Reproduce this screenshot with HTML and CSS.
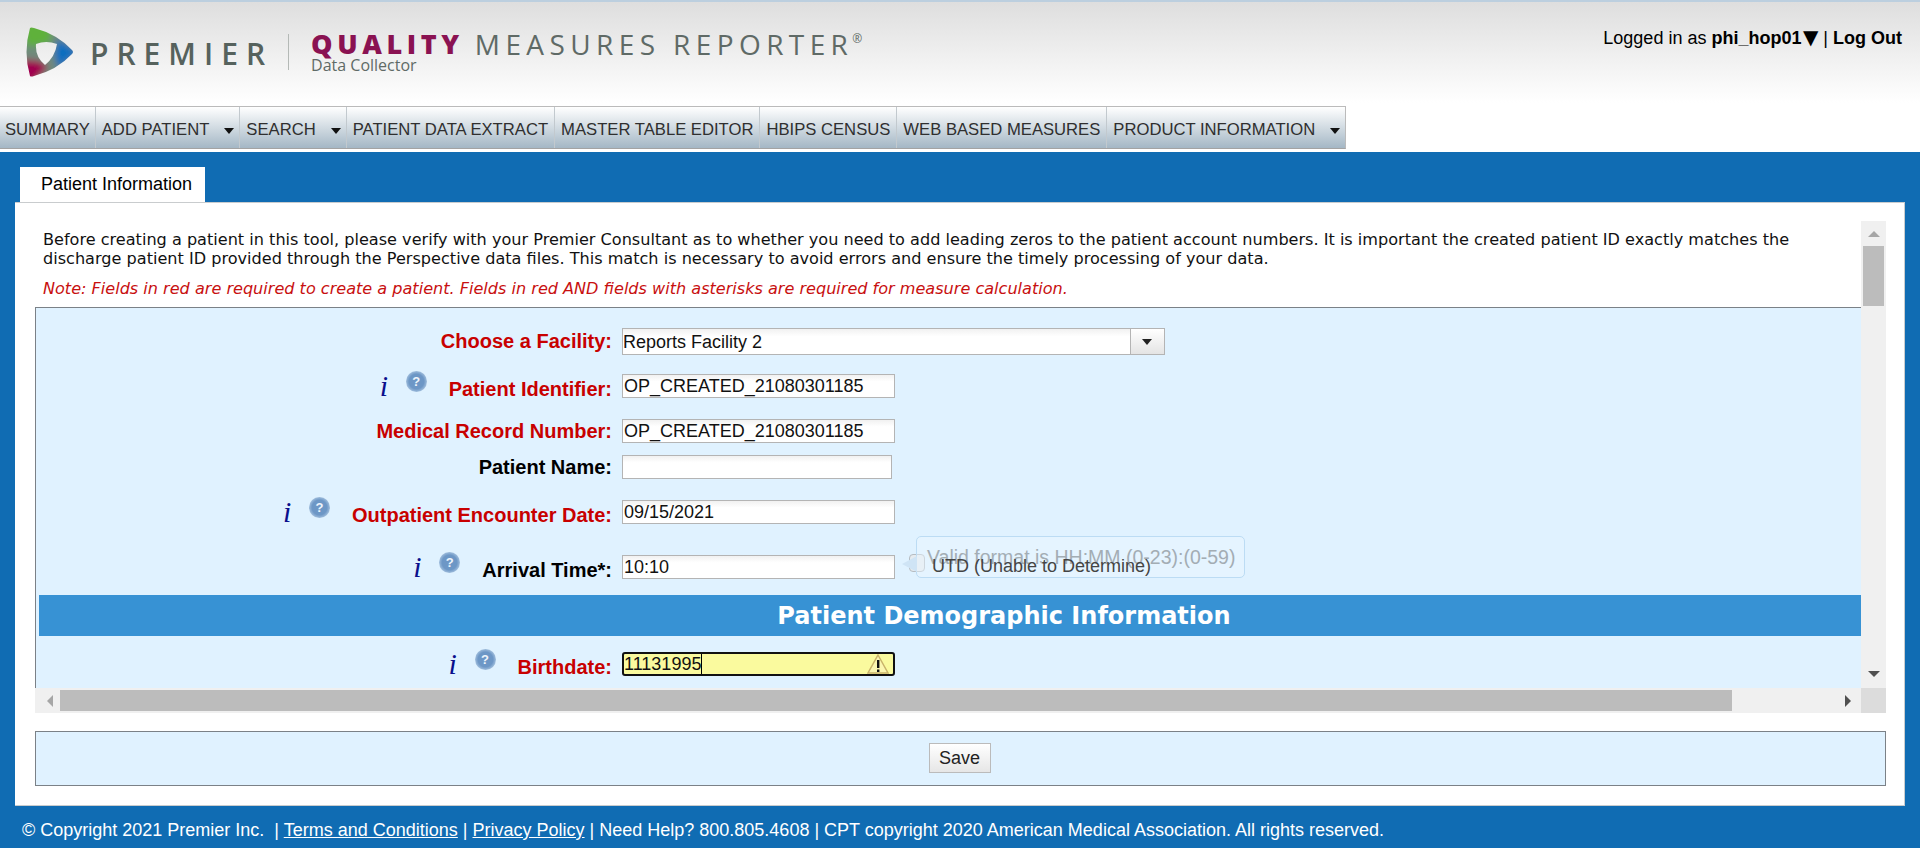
FILE: index.html
```html
<!DOCTYPE html>
<html lang="en">
<head>
    <meta charset="UTF-8">
    <meta name="viewport" content="width=device-width, initial-scale=1.0">
    <title>Quality Measures Reporter - Patient Information</title>
    <link rel="stylesheet" href="styles.css">
</head>
<body>

    <header class="site-header">
        <div class="brand">
            <svg class="logo-mark" width="50" height="50" viewBox="0 0 50 50">
                <defs>
                    <clipPath id="ring">
                        <path clip-rule="evenodd" d="M6 1 Q7 0 10 1 Q33 7 48 23 Q50 25 48 27 Q33 43 10 49 Q7 50 6 49 Q-1 25 6 1 Z M12 17 Q22 13 33 17 Q31 30 21 38 Q11 30 12 17 Z"/>
                    </clipPath>
                    <filter id="soft" x="-30%" y="-30%" width="160%" height="160%">
                        <feGaussianBlur stdDeviation="3"/>
                    </filter>
                </defs>
                <g clip-path="url(#ring)">
                    <g filter="url(#soft)">
                        <rect x="-5" y="-5" width="60" height="60" fill="#6f8a7c"/>
                        <polygon points="-5,-5 28,-5 26,16 4,20" fill="#5fb13a"/>
                        <polygon points="34,12 55,25 34,42 30,26" fill="#0d6ebf"/>
                        <polygon points="-5,32 16,34 24,40 10,55 -5,55" fill="#a0054f"/>
                    </g>
                </g>
            </svg>
            <span class="brand-premier">PREMIER</span>
            <span class="brand-divider"></span>
            <div class="brand-product">
                <div class="brand-title"><b>QUALITY</b><span class="brand-measures">MEASURES REPORTER</span><sup>®</sup></div>
                <div class="brand-sub">Data Collector</div>
            </div>
        </div>
        <div class="user-info">Logged in as <b>phi_hop01</b><span class="user-arrow">▼</span> | <b>Log Out</b></div>
    </header>

    <nav class="main-nav">
        <a href="#">SUMMARY</a>
        <a href="#" class="has-menu">ADD PATIENT</a>
        <a href="#" class="has-menu">SEARCH</a>
        <a href="#">PATIENT DATA EXTRACT</a>
        <a href="#">MASTER TABLE EDITOR</a>
        <a href="#">HBIPS CENSUS</a>
        <a href="#">WEB BASED MEASURES</a>
        <a href="#" class="has-menu">PRODUCT INFORMATION</a>
    </nav>

    <main class="page">
        <div class="tab">Patient Information</div>
        <section class="panel">
            <div class="scroll-frame">
                <div class="scroll-content">
                    <p class="intro">Before creating a patient in this tool, please verify with your Premier Consultant as to whether you need to add leading zeros to the patient account numbers. It is important the created patient ID exactly matches the discharge patient ID provided through the Perspective data files. This match is necessary to avoid errors and ensure the timely processing of your data.</p>
                    <p class="note">Note: Fields in red are required to create a patient. Fields in red AND fields with asterisks are required for measure calculation.</p>

                    <form class="patient-form">
                        <div class="row row-facility">
                            <div class="label-cell required"><label>Choose a Facility:</label></div>
                            <div class="select-wrap">
                                <select><option>Reports Facility 2</option></select>
                                <span class="select-btn"></span>
                            </div>
                        </div>
                        <div class="row row-id">
                            <div class="label-cell required has-help">
                                <span class="info-i">i</span><span class="help-icon">?</span>
                                <label>Patient Identifier:</label>
                            </div>
                            <input type="text" value="OP_CREATED_21080301185">
                        </div>
                        <div class="row row-mrn">
                            <div class="label-cell required"><label>Medical Record Number:</label></div>
                            <input type="text" value="OP_CREATED_21080301185">
                        </div>
                        <div class="row row-name">
                            <div class="label-cell"><label>Patient Name:</label></div>
                            <input type="text" class="input-short">
                        </div>
                        <div class="row row-date">
                            <div class="label-cell required has-help">
                                <span class="info-i">i</span><span class="help-icon">?</span>
                                <label>Outpatient Encounter Date:</label>
                            </div>
                            <input type="text" value="09/15/2021">
                        </div>
                        <div class="row row-time">
                            <div class="label-cell has-help">
                                <span class="info-i">i</span><span class="help-icon">?</span>
                                <label>Arrival Time*:</label>
                            </div>
                            <input type="text" value="10:10">
                            <span class="utd-box"></span>
                            <span class="utd-text">UTD (Unable to Determine)</span>
                            <div class="tooltip">Valid format is HH:MM (0-23):(0-59)</div>
                        </div>
                        <h3 class="section-title">Patient Demographic Information</h3>
                        <div class="row row-birth">
                            <div class="label-cell required has-help">
                                <span class="info-i">i</span><span class="help-icon">?</span>
                                <label>Birthdate:</label>
                            </div>
                            <div class="warn-wrap">
                                <input type="text" class="input-warn" value="11131995">
                                <span class="caret"></span>
                                <svg class="warn-icon" width="22" height="20" viewBox="0 0 22 20">
                                    <path d="M11 1 L21 19 L1 19 Z" fill="#fbf6b0" stroke="#c9b36a" stroke-width="1.5"/>
                                    <rect x="10" y="6" width="2.4" height="8" fill="#111"/>
                                    <rect x="10" y="15.5" width="2.4" height="2.5" fill="#111"/>
                                </svg>
                            </div>
                        </div>
                    </form>
                </div>

                <div class="vbar">
                    <span class="arrow arrow-up"></span>
                    <span class="vthumb"></span>
                    <span class="arrow arrow-down"></span>
                </div>
                <div class="hbar">
                    <span class="arrow arrow-left"></span>
                    <span class="hthumb"></span>
                    <span class="arrow arrow-right"></span>
                </div>
                <div class="corner"></div>
            </div>

            <div class="save-box">
                <button type="button" class="save-btn">Save</button>
            </div>
        </section>

        <footer class="site-footer">© Copyright 2021 Premier Inc. &nbsp;| <a href="#">Terms and Conditions</a> | <a href="#">Privacy Policy</a> | Need Help? 800.805.4608 | CPT copyright 2020 American Medical Association. All rights reserved.</footer>
    </main>

</body>
</html>
```

FILE: styles.css
```css
html, body {
    height: 848px;
    overflow: hidden;
}

body {
    margin: 0;
    padding: 0;
    font-family: 'Liberation Sans', Arial, sans-serif;
    background: #fff;
    color: #000;
}

/* header */

.site-header {
    display: flex;
    justify-content: space-between;
    height: 104px;
    border-top: 2px solid #bccfdf;
    background: linear-gradient(#dedede, #fff 97%);
}

.brand {
    display: flex;
    align-items: flex-start;
    padding-left: 24px;
}

.logo-mark {
    margin-top: 25px;
    flex: none;
}

.brand-premier {
    margin-top: 32px;
    margin-left: 16px;
    font-family: 'Open Sans', sans-serif;
    font-size: 30px;
    font-weight: 600;
    line-height: 40px;
    letter-spacing: 8px;
    color: #56625d;
}

.brand-divider {
    width: 1px;
    height: 36px;
    margin-top: 32px;
    margin-left: 15px;
    background: #b4b9b6;
}

.brand-product {
    margin-left: 22px;
    margin-top: 29px;
}

.brand-title {
    display: flex;
    font-family: 'Open Sans', sans-serif;
    font-size: 28px;
    line-height: 26px;
    letter-spacing: 5.4px;
    color: #5f6a66;
    white-space: nowrap;
}

.brand-title b {
    font-size: 27px;
    font-weight: 800;
    letter-spacing: 4.6px;
    color: #8a1252;
}

.brand-measures {
    margin-left: 11px;
}

.brand-title sup {
    margin-left: -1px;
    font-size: 12px;
    line-height: 16px;
    letter-spacing: 0;
}

.brand-sub {
    font-family: 'Open Sans', sans-serif;
    font-size: 16px;
    line-height: 16px;
    color: #5f6a66;
}

.user-info {
    margin-top: 26px;
    padding-right: 18px;
    font-size: 18px;
    line-height: 20px;
}

.user-arrow {
    margin-left: 1.5px;
    font-family: 'DejaVu Sans', sans-serif;
    font-size: 20px;
    line-height: 0;
}

/* nav */

.main-nav {
    display: flex;
    width: max-content;
    height: 41px;
    margin-bottom: 3px;
    border-top: 1px solid #bbb;
    border-bottom: 1px solid #a3a3a3;
    border-right: 1px solid #bbb;
    background: linear-gradient(#fff, #a4b7c5);
}

.main-nav a {
    padding: 0 6px;
    border-right: 1px solid #c2c9ce;
    font-size: 16.65px;
    line-height: 45px;
    color: #2f2f2f;
    text-decoration: none;
    white-space: nowrap;
}

.main-nav a:first-child {
    padding: 0 5px;
}

.main-nav a:last-child {
    border-right: 0;
}

.main-nav a.has-menu::after {
    content: "";
    display: inline-block;
    margin-left: 15px;
    margin-right: -1px;
    border-top: 6px solid #111;
    border-left: 5.5px solid transparent;
    border-right: 5.5px solid transparent;
    vertical-align: 1px;
}

/* page */

.page {
    height: 696px;
    padding: 15px 15px 0;
    box-sizing: border-box;
    background: #106cb3;
}

.tab {
    width: 185px;
    height: 35px;
    margin-left: 5px;
    box-sizing: border-box;
    padding-left: 21px;
    background: #fff;
    font-size: 18px;
    line-height: 34px;
}

.panel {
    height: 604px;
    box-sizing: border-box;
    padding: 18px 18px 0 19px;
    border: 1px solid #c9ccce;
    border-left: 0;
    background: #fff;
}

.scroll-frame {
    display: grid;
    grid-template-columns: 1fr 25px;
    grid-template-rows: 467px 25px;
    margin-left: 1px;
}

.scroll-content {
    overflow: hidden;
}

.intro {
    margin: 0;
    padding: 10px 60px 0 8px;
    font-family: 'DejaVu Sans', Verdana, sans-serif;
    font-size: 16.1px;
    line-height: 18.5px;
    color: #111;
}

.note {
    margin: 11px 0 0;
    padding-left: 8px;
    font-family: 'DejaVu Sans', Verdana, sans-serif;
    font-size: 16.08px;
    font-style: italic;
    line-height: 19px;
    color: #c81010;
}

/* form */

.patient-form {
    margin-top: 9px;
    padding: 20px 0 20px 3px;
    border-top: 1px solid #7b8187;
    border-left: 1px solid #7b8187;
    background: #e0f2ff;
    height: 500px;
    box-sizing: border-box;
}

.row {
    position: relative;
    display: flex;
    align-items: flex-start;
}

.row-id { margin-top: 19px; }
.row-mrn { margin-top: 21px; }
.row-name { margin-top: 12px; }
.row-date { margin-top: 21px; }
.row-time { margin-top: 31px; }
.row-birth { margin-top: 16px; }

.label-cell {
    display: flex;
    justify-content: flex-end;
    align-items: flex-start;
    width: 573px;
    height: 24px;
    margin-right: 10px;
    font-size: 20px;
    font-weight: bold;
    line-height: 24px;
    white-space: nowrap;
}

.row-facility .label-cell {
    height: 27px;
    line-height: 27px;
}

.has-help label {
    margin-top: 3px;
}

.required label {
    color: #c80000;
}

.info-i {
    width: 9px;
    margin-top: -1px;
    font-family: 'Liberation Serif', serif;
    font-size: 30px;
    font-style: italic;
    font-weight: normal;
    line-height: 26px;
    color: #0a0f8c;
}

.help-icon {
    width: 21px;
    height: 21px;
    margin: -3px 22px 0 17px;
    border-radius: 50%;
    background: radial-gradient(circle, #6d97c6 50%, #a3c0de 72%, #cfdfef);
    font-size: 13px;
    font-weight: bold;
    line-height: 21px;
    text-align: center;
    color: #eef4fb;
}

input[type="text"] {
    width: 273px;
    height: 24px;
    padding: 0 1px;
    box-sizing: border-box;
    border: 1px solid #b4b4b4;
    background: linear-gradient(#f1f1f1, #fff 30%);
    font-family: 'Liberation Sans', Arial, sans-serif;
    font-size: 18px;
    color: #111;
}

input.input-short {
    width: 270px;
}

.select-wrap {
    display: flex;
    width: 543px;
    height: 27px;
    box-sizing: border-box;
    border: 1px solid #b4b4b4;
    background: linear-gradient(#f1f1f1, #fff 30%);
}

.select-wrap select {
    flex: 1;
    padding: 0;
    border: 0;
    border-radius: 0;
    appearance: none;
    background: transparent;
    font-family: 'Liberation Sans', Arial, sans-serif;
    font-size: 18px;
    color: #111;
}

.select-btn {
    position: relative;
    width: 33px;
    border-left: 1px solid #b4b4b4;
    background: linear-gradient(#fff, #e4e4e4);
}

.select-btn::after {
    content: "";
    position: absolute;
    left: 11px;
    top: 10px;
    border-top: 6px solid #222;
    border-left: 5.5px solid transparent;
    border-right: 5.5px solid transparent;
}

.utd-box {
    width: 16px;
    height: 18px;
    margin: -1px 0 0 14px;
    border: 1px solid #b5bcc2;
    border-radius: 4px;
    box-sizing: border-box;
    background: #e6ebef;
}

.utd-text {
    position: relative;
    z-index: 2;
    margin-left: 7px;
    margin-top: 2px;
    font-size: 18px;
    line-height: 18px;
    color: #444;
    white-space: nowrap;
}

.tooltip {
    position: absolute;
    left: 877px;
    top: -19px;
    width: 329px;
    height: 42px;
    box-sizing: border-box;
    padding-left: 10px;
    border: 1px solid #bcdcf4;
    border-radius: 5px;
    background: rgba(236, 247, 255, 0.45);
    font-size: 19.5px;
    line-height: 40px;
    color: #a3adb4;
    white-space: nowrap;
}

.tooltip::before {
    content: "";
    position: absolute;
    left: -15px;
    top: 19px;
    border-top: 8px solid transparent;
    border-bottom: 8px solid transparent;
    border-right: 15px solid #cfe4f5;
}

.section-title {
    height: 41px;
    margin: 16px 0 0;
    padding-left: 108px;
    background: #3792d4;
    font-family: 'DejaVu Sans', Verdana, sans-serif;
    font-size: 24px;
    font-weight: bold;
    line-height: 42px;
    text-align: center;
    color: #fff;
}

.warn-wrap {
    position: relative;
}

input.input-warn {
    display: block;
    border: 2px solid #111;
    border-radius: 3px;
    background: #fafa9e;
    padding: 0;
}

.caret {
    position: absolute;
    left: 79px;
    top: 2px;
    width: 1px;
    height: 20px;
    background: #000;
}

.warn-icon {
    position: absolute;
    right: 6px;
    top: 2px;
}

/* fake scrollbars */

.vbar {
    display: flex;
    flex-direction: column;
    align-items: center;
    background: #f0f0f0;
}

.vthumb {
    width: 21px;
    height: 60px;
    margin-top: 9px;
    background: #bcbcbc;
}

.hbar {
    display: flex;
    align-items: center;
    padding: 0 10px 0 12px;
    background: #f0f0f0;
}

.hthumb {
    width: 1672px;
    height: 21px;
    margin-left: 7px;
    background: #bcbcbc;
}

.corner {
    background: #dcdcdc;
}

.arrow {
    flex: none;
    width: 0;
    height: 0;
}

.arrow-up {
    margin-top: 10px;
    border-bottom: 6px solid #a6a6a6;
    border-left: 6px solid transparent;
    border-right: 6px solid transparent;
}

.arrow-down {
    margin-top: auto;
    margin-bottom: 11px;
    border-top: 6px solid #505050;
    border-left: 6px solid transparent;
    border-right: 6px solid transparent;
}

.arrow-left {
    border-right: 6px solid #a6a6a6;
    border-top: 6px solid transparent;
    border-bottom: 6px solid transparent;
}

.arrow-right {
    margin-left: auto;
    border-left: 6px solid #505050;
    border-top: 6px solid transparent;
    border-bottom: 6px solid transparent;
}

/* save */

.save-box {
    display: flex;
    justify-content: center;
    margin-top: 18px;
    margin-left: 1px;
    height: 55px;
    box-sizing: border-box;
    padding-top: 11px;
    padding-right: 2px;
    border: 1.5px solid #7b8187;
    background: #e0f2ff;
}

.save-btn {
    width: 62px;
    height: 30px;
    padding: 0;
    border: 1px solid #bbb;
    background: linear-gradient(#fff, #e6e6e6);
    font-family: 'Liberation Sans', Arial, sans-serif;
    font-size: 18px;
    color: #222;
}

/* footer */

.site-footer {
    padding: 14px 0 0 7px;
    font-size: 18px;
    line-height: 20px;
    color: #fff;
    white-space: nowrap;
}

.site-footer a {
    color: #fff;
}
```
